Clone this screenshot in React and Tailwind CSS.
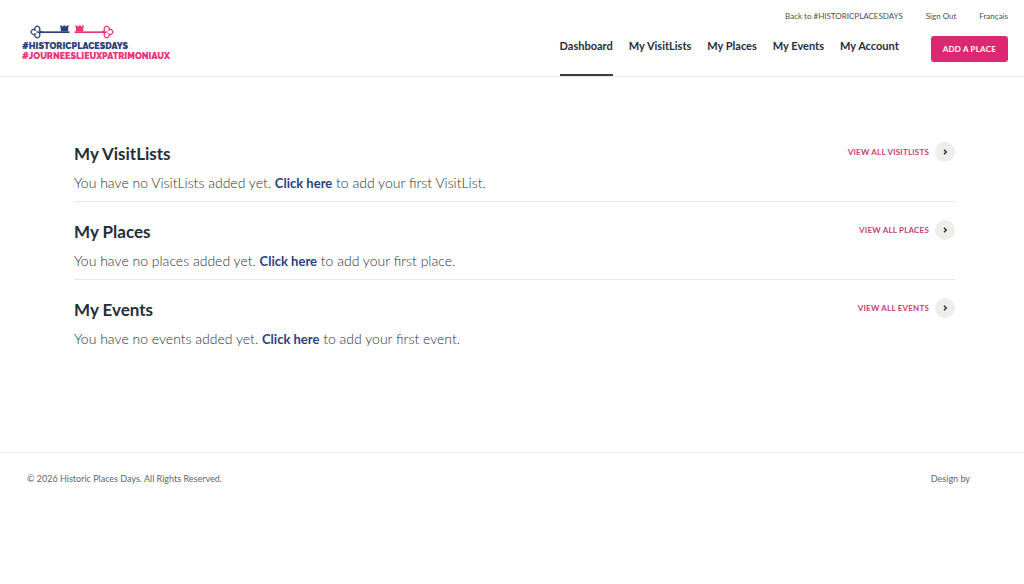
const topLinks = ['Back to #HISTORICPLACESDAYS', 'Sign Out', 'Français'];

const navLinks = ['Dashboard', 'My VisitLists', 'My Places', 'My Events', 'My Account'];

const sections = [
  { title: 'My VisitLists', plural: 'VisitLists', single: 'VisitList' },
  { title: 'My Places', plural: 'places', single: 'place' },
  { title: 'My Events', plural: 'events', single: 'event' },
];

// Key with a clover bow on the left and a crown-shaped bit on the right
function KeyShape({ color }) {
  return (
    <g stroke={color} fill="none">
      <path
        d="M5.2 5.2 A2.5 2.5 0 1 1 9.4 5.2 Q9.8 6.2 12 7 Q9.8 7.8 9.4 8.8 A2.5 2.5 0 1 1 5.2 8.8 A2.4 2.4 0 1 1 5.2 5.2 Z"
        strokeWidth="1.2"
      />
      <path d="M5.2 5.2 L8 7 L5.2 8.8" strokeWidth="0.7" />
      <path d="M8 7.2 H39.5" strokeWidth="1.7" />
      <path d="M30.8 6.6 V4 L30 0.5 H32 L32.8 2.2 L33.3 0.5 H35.5 L36 2.2 L36.8 0.5 H38.8 L38 4 V6.6 Z" fill={color} stroke="none" />
    </g>
  );
}

function Logo() {
  return (
    <a href="#" aria-label="Historic Places Days" className="flex flex-col font-['Raleway','Lato',sans-serif] text-[9px] leading-[10px] font-black">
      <svg viewBox="0 0 86 14" className="mb-[2px] ml-2 h-[14px] w-[86px]" aria-hidden="true">
        <KeyShape color="#2b3f7c" />
        <g transform="translate(84 0) scale(-1 1)">
          <KeyShape color="#e8347a" />
        </g>
      </svg>
      <span className="text-[#2b3f7c]">#HISTORICPLACESDAYS</span>
      <span className="text-[#e8347a]">#JOURNEESLIEUXPATRIMONIAUX</span>
    </a>
  );
}

function Header() {
  return (
    <header className="flex items-start justify-between border-b border-[#e6e6e6] pr-4 pl-[22px]">
      <div className="pt-[25px]">
        <Logo />
      </div>
      <div className="flex flex-col items-end">
        <div className="flex gap-[23px] pt-[10px] text-[8px] leading-3 text-[#4a4f55]">
          {topLinks.map((label) => (
            <a key={label} href="#">{label}</a>
          ))}
        </div>
        <div className="flex items-start gap-8 pt-[14px]">
          <nav className="flex gap-4">
            {navLinks.map((label, i) => (
              <a
                key={label}
                href="#"
                className={`border-b-2 pt-[2px] pb-5 text-[11px] leading-4 font-bold text-[#252d38] ${i === 0 ? 'border-[#3c3c4c]' : 'border-transparent'}`}
              >
                {label}
              </a>
            ))}
          </nav>
          <button type="button" className="rounded-[3px] bg-[#dc2870] px-3 py-[7px] text-[8px] leading-3 font-bold tracking-wide text-white">
            ADD A PLACE
          </button>
        </div>
      </div>
    </header>
  );
}

function Section({ title, plural, single }) {
  return (
    <section className="border-b border-[#e6e6e6] pt-4 pb-[6px] last:border-transparent">
      <div className="flex items-start justify-between">
        <h2 className="text-[17px] leading-7 font-bold text-[#252d38]">{title}</h2>
        <a href="#" className="flex items-center gap-[6px] pt-[2px] text-[8px] leading-3 font-bold tracking-wide text-[#c83c78] uppercase">
          View all {plural}
          <span className="flex size-5 items-center justify-center rounded-full bg-[#eeede9]">
            <svg viewBox="0 0 6 6" className="size-[6px]" fill="none" stroke="#252d38" strokeWidth="1.4" aria-hidden="true">
              <path d="M2 0.7 L4.3 3 L2 5.3" />
            </svg>
          </span>
        </a>
      </div>
      <p className="pt-[3px] text-[14px] leading-6 font-light text-[#2c3036]">
        You have no {plural} added yet.{' '}
        <a href="#" className="text-[13px] font-bold text-[#2b3f7c]">Click here</a> to add your first {single}.
      </p>
    </section>
  );
}

export default function App() {
  return (
    <div className="min-h-screen bg-white font-['Lato',sans-serif]">
      <Header />
      <main className="pt-[47px] pr-[69px] pb-[94px] pl-[74px]">
        {sections.map((section) => (
          <Section key={section.title} {...section} />
        ))}
      </main>
      <footer className="flex justify-between border-t border-[#f2f2f2] pt-[18px] pr-[54px] pl-[27px] text-[9px] leading-4 text-[#62666c]">
        <p>© 2026 Historic Places Days. All Rights Reserved.</p>
        <p>Design by</p>
      </footer>
    </div>
  );
}
